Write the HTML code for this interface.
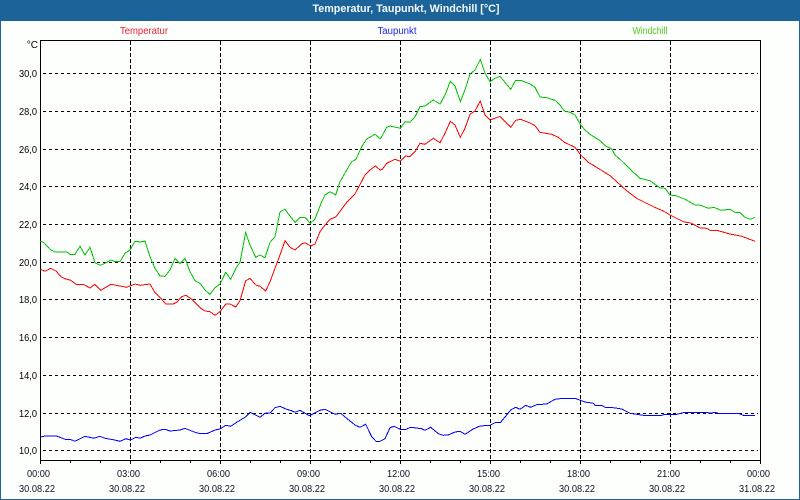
<!DOCTYPE html>
<html>
<head>
<meta charset="utf-8">
<style>
html,body{margin:0;padding:0;background:#fdfffd;}
svg{display:block;}
text{font-family:"Liberation Sans",sans-serif;font-size:10px;fill:#000;}
.c{text-anchor:middle;}
.r{text-anchor:end;}
.tm{fill:#112;}
</style>
</head>
<body>
<svg width="800" height="500" viewBox="0 0 800 500" xmlns="http://www.w3.org/2000/svg">
<rect x="0" y="0" width="800" height="500" fill="#fdfffd"/>
<rect x="0" y="0" width="800" height="21" fill="#1c6399"/>
<rect x="0" y="0" width="1" height="500" fill="#1c6399"/>
<rect x="799" y="0" width="1" height="500" fill="#1c6399"/>
<rect x="0" y="499" width="800" height="1" fill="#1c6399"/>
<text x="406" y="12" class="c" style="font-weight:bold;font-size:11px;fill:#f4f8fb" textLength="187" lengthAdjust="spacingAndGlyphs">Temperatur, Taupunkt, Windchill [°C]</text>
<text x="144" y="34" class="c" style="fill:#f01c30" textLength="48" lengthAdjust="spacingAndGlyphs">Temperatur</text>
<text x="397" y="34" class="c" style="fill:#2020e8" textLength="39" lengthAdjust="spacingAndGlyphs">Taupunkt</text>
<text x="650" y="34" class="c" style="fill:#55c820" textLength="35" lengthAdjust="spacingAndGlyphs">Windchill</text>

<g shape-rendering="crispEdges" fill="none" stroke="#000" stroke-width="1">
<path stroke-dasharray="3 3" d="M43 73.5H758M43 111.5H758M43 149.5H758M43 186.5H758M43 224.5H758M43 262.5H758M43 299.5H758M43 337.5H758M43 375.5H758M43 413.5H758M43 450.5H758"/>
<path stroke-dasharray="4 2" d="M130.5 41V460M220.5 41V460M310.5 41V460M400.5 41V460M490.5 41V460M580.5 41V460M670.5 41V460"/>
<path d="M40.5 40.5H760.5V460.5H40.5Z"/>
<path d="M40.5 460V464M70.5 460V463M100.5 460V463M130.5 460V464M160.5 460V463M190.5 460V463M220.5 460V464M250.5 460V463M280.5 460V463M310.5 460V464M340.5 460V463M370.5 460V463M400.5 460V464M430.5 460V463M460.5 460V463M490.5 460V464M520.5 460V463M550.5 460V463M580.5 460V464M610.5 460V463M640.5 460V463M670.5 460V464M700.5 460V463M730.5 460V463M760.5 460V464"/>

<polyline stroke="#00c000" points="40.3,241 44,242.7 50,249.3 55,252 67,252 70,254.3 75,254.3 80,246.3 85,255 90,247.3 95,262.7 100,265.3 105,263.3 111,260 115,261.7 120,261.7 125,253.3 130,250 135,241.3 140,242 145,241 150,256.7 155,268.3 160,276 165,276.3 170,270 175,258.3 180,263.3 185,258.3 190,271.7 195,280.7 200,283.3 205,290 210,294.3 215,287.7 220,284 225.7,272.3 230.7,279.3 236.7,266.7 240,262.3 245.7,232.3 250,245 255.7,257.3 260,255 265,257.7 270,242.3 275,236.7 280,211.7 285,209.3 290,216 295,222.3 300,217.3 305,217.3 310.3,223.3 315,219 321.7,201.7 325,195 330,191.7 335.7,195 340,181.7 347.3,169 351.7,161.7 356,159.3 361.7,146.7 366.7,139 375,134.3 380.3,139 386.7,127.3 390,126 400.3,128.3 405,121.7 410,122.3 415,116.7 420,106.7 425,106 433.3,100 440,104 445,95 450.3,81.3 455,86 460.3,101.7 465,90 470,74 475,70 480.3,59.3 485,73.3 490,81.7 495,78.3 500,76.3 510.7,89.3 515.7,80.3 520.7,80.3 530,84 535,87.3 540,97 546.7,97.7 555,100.3 560,105 564.3,111 570,112.3 575,115 580.7,125 585,130 590,134.3 600,140.7 605,145.7 611.7,149 615,155 620,159.3 631,170 640,178.3 650,180.7 660,188 665,188.3 670,195 676,195.7 685,199.3 695,205 700.7,205.3 708.3,208.3 714,207.3 720.7,210.3 730,209.3 735,212.3 740,212.3 745,217.3 750,219.3 755,217.3"/>

<polyline stroke="#ff0000" points="40.3,269.3 45,271.3 50.7,268.3 56,271 61,276.7 65,278.7 70.7,280.3 76,284.3 83.3,284.3 90,288 95,284.3 100.7,290.3 111,284.3 120,286 126.7,287.3 135,284 140,285.3 150,284 155,292.7 161,298.3 165.7,304 173.3,304 176.7,302.3 181.7,296.7 186,295.3 191.7,299.3 201.7,309 205,311 210,311.7 215,315.3 220,311.7 225.7,304 230,304 235.7,307 240,300.7 245.7,280.7 250,278.3 255.7,285 260,286.3 265.7,291 270,281.7 275,268.3 280,255 285,240.7 290,247.3 295,250 301.7,244 305,242.7 310.7,246 315,244 320,231.7 325,225 330,219.3 335.7,217 347.3,201.7 355,194 365,175 370,170 375.3,166 380,170 382.3,169.3 386.7,163.3 395,159.3 400.3,161.3 405.7,156 410,156.7 415,151.7 420,143.3 425,144.3 433.3,138.3 440,142.7 445,133.3 450.3,121.3 455,125 460.3,137.3 465,128.3 470,114.3 475,111 480.3,101 485,115 490,120 495,118.3 500,116.3 510.7,127.3 515.7,120.3 520.7,119.3 530,123 535,125.7 540,132.3 551.7,134.3 558.3,137.3 564.3,142.3 575,147.3 580.7,155 588.3,162.3 601,170 610,175.7 626.7,190.7 636.7,198.3 653.3,206.7 663.3,211 670,215 683.3,221.7 691.7,223.3 700,228 706.7,228.3 710,230.3 716.7,230.3 730,234 741.7,236.3 755,241.3"/>

<polyline stroke="#0000ff" points="40.3,437 45,436 56.7,436 65,439.3 70,439.3 75,441.3 85,436.3 94,438.3 100,436.3 105,438.3 113.3,439.7 120,441.3 126,438.7 130.3,440 136,437.3 140,438.3 145,436 150,435 160,430 165,429.3 170,431 180,430 185,428.3 195,432.3 200,433.7 206.7,433.7 215,430 220,429 225.7,425.3 230.7,426.3 236.7,422.3 245,417.3 250,412.3 260,417.3 265,413.3 270,413 275,407.7 280,406.3 286.7,409.3 291.7,410.7 295,412.3 300,410.3 309.3,415.7 320,410.3 325,409.3 335,414.3 340.7,413.3 346.7,418.3 355,425 360,427.3 365.7,424.3 371.7,436.7 376,441.3 380,441.3 385,438.7 390,427.7 394,426.3 400.3,429.3 406,429.3 410.7,427.3 421.7,428.7 425,430.3 430.7,427.3 438.3,433.7 443.3,435.3 448.3,435 455,432 460,431.3 465,434.3 473.3,429 480,426 490,425.3 496,422.3 500.7,422.3 510.7,410 515.7,407.3 520,409.3 525.7,405.3 530.7,407.3 536.7,404.7 546.7,404 555,399.3 563.3,398.3 575,398.3 585,402 593.3,403.3 595,405.3 601.7,405.3 605,407.3 613.3,407.7 621.7,409 630,413.3 643.3,415.3 661.7,415.3 665,414.3 676.7,414.3 685,412.3 706.7,412.3 710,413.3 715,412.3 718.3,413.3 738.3,413.3 743.3,415.3 755,415.3"/>
</g>

<text x="38" y="48" class="r">°C</text>
<text x="37" y="77" class="r" textLength="18" lengthAdjust="spacingAndGlyphs">30,0</text>
<text x="37" y="115" class="r" textLength="18" lengthAdjust="spacingAndGlyphs">28,0</text>
<text x="37" y="153" class="r" textLength="18" lengthAdjust="spacingAndGlyphs">26,0</text>
<text x="37" y="190" class="r" textLength="18" lengthAdjust="spacingAndGlyphs">24,0</text>
<text x="37" y="228" class="r" textLength="18" lengthAdjust="spacingAndGlyphs">22,0</text>
<text x="37" y="266" class="r" textLength="18" lengthAdjust="spacingAndGlyphs">20,0</text>
<text x="37" y="303" class="r" textLength="18" lengthAdjust="spacingAndGlyphs">18,0</text>
<text x="37" y="341" class="r" textLength="18" lengthAdjust="spacingAndGlyphs">16,0</text>
<text x="37" y="379" class="r" textLength="18" lengthAdjust="spacingAndGlyphs">14,0</text>
<text x="37" y="417" class="r" textLength="18" lengthAdjust="spacingAndGlyphs">12,0</text>
<text x="37" y="454" class="r" textLength="18" lengthAdjust="spacingAndGlyphs">10,0</text>

<g class="times">
<text x="38.5" y="477" class="c tm" textLength="23" lengthAdjust="spacingAndGlyphs">00:00</text>
<text x="128.5" y="477" class="c tm" textLength="23" lengthAdjust="spacingAndGlyphs">03:00</text>
<text x="218.5" y="477" class="c tm" textLength="23" lengthAdjust="spacingAndGlyphs">06:00</text>
<text x="308.5" y="477" class="c tm" textLength="23" lengthAdjust="spacingAndGlyphs">09:00</text>
<text x="398.5" y="477" class="c tm" textLength="23" lengthAdjust="spacingAndGlyphs">12:00</text>
<text x="488.5" y="477" class="c tm" textLength="23" lengthAdjust="spacingAndGlyphs">15:00</text>
<text x="578.5" y="477" class="c tm" textLength="23" lengthAdjust="spacingAndGlyphs">18:00</text>
<text x="668.5" y="477" class="c tm" textLength="23" lengthAdjust="spacingAndGlyphs">21:00</text>
<text x="758.5" y="477" class="c tm" textLength="23" lengthAdjust="spacingAndGlyphs">00:00</text>
<text x="37" y="492" class="c tm" textLength="36" lengthAdjust="spacingAndGlyphs">30.08.22</text>
<text x="127" y="492" class="c tm" textLength="36" lengthAdjust="spacingAndGlyphs">30.08.22</text>
<text x="217" y="492" class="c tm" textLength="36" lengthAdjust="spacingAndGlyphs">30.08.22</text>
<text x="307" y="492" class="c tm" textLength="36" lengthAdjust="spacingAndGlyphs">30.08.22</text>
<text x="397" y="492" class="c tm" textLength="36" lengthAdjust="spacingAndGlyphs">30.08.22</text>
<text x="487" y="492" class="c tm" textLength="36" lengthAdjust="spacingAndGlyphs">30.08.22</text>
<text x="577" y="492" class="c tm" textLength="36" lengthAdjust="spacingAndGlyphs">30.08.22</text>
<text x="667" y="492" class="c tm" textLength="36" lengthAdjust="spacingAndGlyphs">30.08.22</text>
<text x="757" y="492" class="c tm" textLength="36" lengthAdjust="spacingAndGlyphs">31.08.22</text>
</g>
</svg>
</body>
</html>
